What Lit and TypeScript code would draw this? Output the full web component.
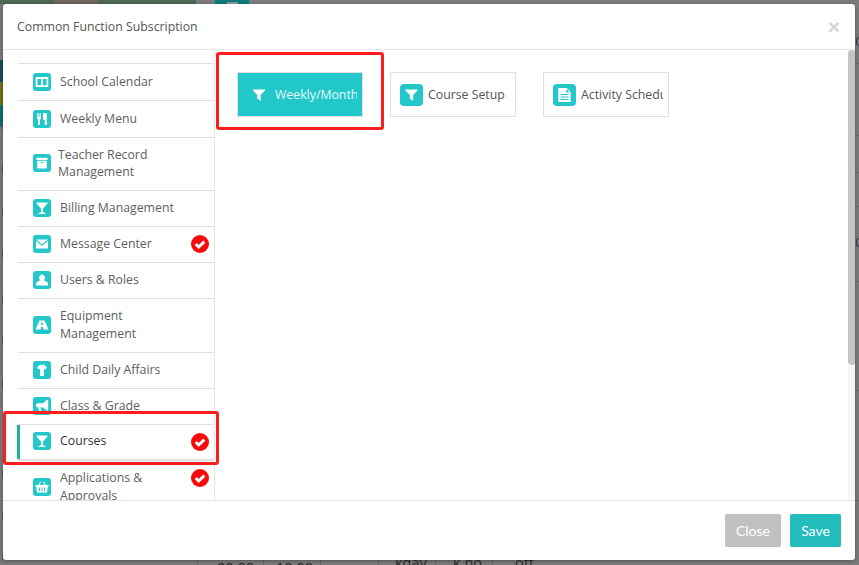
import { LitElement, html, css, svg } from "lit";
import { customElement } from "lit/decorators.js";

const glyphs: Record<string, unknown> = {
  columns: svg`<path fill-rule="evenodd" d="M3.500 4h11a.8.8 0 0 1 .8.8v8.400a.8.8 0 0 1-.8.8h-11a.8.8 0 0 1-.8-.8V4.800a.8.8 0 0 1 .8-.8zM4.500 6v6.300h3.600V6zm5.400 0v6.300h3.600V6z"/>`,
  food: svg`<path d="M4 3h.9v3.600h.7V3h.9v3.600h.7V3H8v5c0 .8-.5 1.300-1.100 1.500V15H5v-5.500C4.400 9.300 4 8.800 4 8zM10 3h3.800v12h-2V10H10z"/>`,
  box: svg`<path fill-rule="evenodd" d="M3.500 3.800h11V6h-11zM4.200 6.800h9.600v7.700H4.200zM7.800 8v1h2.400V8z"/>`,
  glass: svg`<path d="M3.500 3.500h11v1L10 9.500V13l2.500 1.200v.8h-7v-.8L8 13V9.500l-4.500-5z"/>`,
  mail: svg`<path d="M3 4.500h12L9 9.300zM3 6l6 4.800L15 6v7.500H3z"/>`,
  user: svg`<path d="M9 3.500a3 3 0 0 1 2.400 4.800C11 9 11 9.500 12 10c2 .7 3 1.400 3 3v1.500H3V13c0-1.600 1-2.300 3-3 1-.5 1-1 .6-1.700A3 3 0 0 1 9 3.500z"/>`,
  road: svg`<path fill-rule="evenodd" d="M6.500 4.500h5L15.500 13.500H10.300L10.100 11H7.900L7.700 13.500H2.500zM8.400 6.500L8.100 9.300h1.800L9.600 6.500z"/>`,
  shirt: svg`<path d="M7.300 3.500 9 4.300l1.700-.8L14 6.500 12.300 8.500 11 7.700V15H7V7.700l-1.300.8L4 6.500z"/>`,
  horn: svg`<path d="M14 2.800h1.200v10.600H14l-4-3H4.500L3 9.500v-2L4.500 6.200H10zM5 10.800h2.500l1 3.700H6.200z"/>`,
  basket: svg`<path fill-rule="evenodd" d="M5 7 7.300 3.500l.9.500L6.300 7h5.400L9.800 4l.9-.5L13 7h2.500v1.500h-.6l-.9 6H4l-.9-6h-.6V7zM6 9.500v3.500h1V9.500zm2.500 0v3.500h1V9.500zm2.500 0v3.500h1V9.500z"/>`,
  filter: svg`<path d="M3 3.500h12v1L10.700 9v6l-3.400-2.500V9L3 4.500z"/>`,
  doc: svg`<path fill-rule="evenodd" d="M2.800 2h8.400l4 4v10H2.800zM10.800 3v3.400h3.400zM5 8v1h8V8zm0 2.500v1h8v-1zM5 13v1h8v-1z"/>`,
};

const icon = (n: string) => svg`<svg viewBox="0 0 18 18" fill="#fff" aria-hidden="true">${glyphs[n]}</svg>`;

const items = [
  { label: "School Calendar", icon: "columns", h: 37, plain: true },
  { label: "Weekly Menu", icon: "food", h: 37, plain: true },
  { label: "Teacher Record Management", icon: "box", h: 53, tight: true },
  { label: "Billing Management", icon: "glass", h: 36 },
  { label: "Message Center", icon: "mail", h: 36, done: true },
  { label: "Users & Roles", icon: "user", h: 36 },
  { label: "Equipment Management", icon: "road", h: 54 },
  { label: "Child Daily Affairs", icon: "shirt", h: 36 },
  { label: "Class & Grade", icon: "horn", h: 36 },
  { label: "Courses", icon: "glass", h: 36, done: true, active: true },
  { label: "Applications & Approvals", icon: "basket", h: 54, done: true },
];

const cards = [
  { label: "Weekly/Month", icon: "filter", on: true },
  { label: "Course Setup", icon: "filter" },
  { label: "Activity Schedule", icon: "doc" },
];

const under = [
  { text: "00:00", w: 66, pad: 19, top: 0 },
  { text: "10:00", w: 57, pad: 12, top: 0 },
  { text: "12:00", w: 58, pad: 13, top: -13 },
  { text: "kday", w: 57, pad: 16, top: -5 },
  { text: "k.no", w: 57, pad: 17, top: -5 },
  { text: "off", w: 57, pad: 22, top: -5 },
];

const leftTicks = [122, 165, 208, 250, 295, 337, 380, 470, 512, 553];
const rightLines = [63, 135, 172, 206, 245, 281, 390, 500];

@customElement("app-root")
export class AppRoot extends LitElement {
  static styles = css`
    :host { display: block; }
    * { box-sizing: border-box; }
    .page {
      position: relative; width: 859px; height: 565px; overflow: hidden;
      padding: 4px 4px 5px 3px; background: #7c7c7c;
      font-family: "Open Sans", "Noto Sans", sans-serif; color: #555;
    }
    .bg { position: absolute; }
    .bg-green { left: 0; top: 0; width: 196px; height: 4px; background: #4e6a54; }
    .bg-photo { left: 54px; top: 0; width: 44px; height: 4px; background: #6f665c; }
    .bg-teal { left: 215px; top: 0; width: 34px; height: 4px; background: #0f7c7c; }
    .bg-teal-in { left: 227px; top: 2px; width: 11px; height: 2px; background: #8d9c9c; }
    .bg-left1 { left: 0; top: 60px; width: 3px; height: 22px; background: #17505a; }
    .bg-left2 { left: 0; top: 82px; width: 3px; height: 23px; background: #6f7414; }
    .bg-left3 { left: 0; top: 105px; width: 3px; height: 22px; background: #0f6f72; }
    .tick { left: 2px; width: 1px; height: 8px; background: #6e5a4c; }
    .bg-line { right: 0; width: 4px; height: 1px; background: #6a6a6a; }
    .ring {
      right: -4px; width: 7px; height: 9px; border: 1px solid #2b3350; border-radius: 50%;
    }
    .r1 { top: 37px; }
    .r2 { top: 238px; }
    .bg-table {
      left: 197px; top: 560px; height: 5px; display: flex; overflow: hidden;
      font: 14.5px/16px "Open Sans", sans-serif; color: #2a2a2a;
    }
    .cell { height: 5px; border-left: 1px solid #6a6a6a; white-space: nowrap; }
    .cell span { display: block; }

    .modal {
      position: relative; height: 556px; display: flex; flex-direction: column;
      background: #fff; border-radius: 3px; box-shadow: 0 1px 4px rgba(0,0,0,.35); overflow: hidden;
    }
    header {
      flex: 0 0 46px; display: flex; align-items: center; justify-content: space-between;
      padding: 0 15px 1px 14px; border-bottom: 1px solid #e5e5e5;
      font-size: 12.3px; color: #555;
    }
    .x { font: 700 21px/1 "Liberation Sans", sans-serif; color: #d4d4d4; }
    .body { flex: 1; display: flex; min-height: 0; }
    .side { flex: 0 0 212px; border-right: 1px solid #e5e5e5; padding: 13px 0 0 15px; overflow: hidden; }
    .row {
      position: relative; display: flex; align-items: center; gap: 9px;
      padding: 0 0 2px 15px; border-top: 1px solid #e0e0e0;
      font-size: 12.3px; line-height: 18px; color: #5e5e5e;
    }
    .row.plain { padding-bottom: 0; }
    .row.tight { gap: 7px; line-height: 17px; }
    .row.active { color: #333; border-bottom: 1px solid #e0e0e0; }
    .row.active::before {
      content: ""; position: absolute; left: -1px; top: 0; bottom: 0; width: 3px; background: #1fb093;
    }
    .ic { flex: none; width: 18px; height: 18px; background: #22c7ca; border-radius: 3px; }
    .ic svg { display: block; width: 100%; height: 100%; }
    .label { width: 122px; }
    .check { position: absolute; right: 5px; top: 8px; width: 18px; height: 18px; }
    .check svg { display: block; }
    .main { flex: 1; display: flex; min-width: 0; }
    .cards { flex: 1; display: flex; align-items: flex-start; gap: 27px; padding: 22px 0 0 22px; }
    .card {
      flex: 0 0 126px; height: 45px; display: flex; align-items: center; gap: 5px;
      padding: 0 5px 0 9px; border: 1px solid #e0e0e0; background: #fff;
      font-size: 12.3px; color: #555; overflow: hidden; white-space: nowrap;
    }
    .card .ic { width: 23px; height: 22px; border-radius: 4px; padding: 2px; }
    .card .txt { overflow: hidden; }
    .card.on { background: #22c7ca; color: #e6fbfb; padding-left: 12px; gap: 7px; }
    .card.on .ic { width: 18px; height: 18px; padding: 0; background: transparent; }
    .bar { flex: 0 0 8px; background: #f6f6f6; margin-right: -1px; }
    .thumb { height: 315px; background: #c6c6c6; border-radius: 4px; }
    footer {
      flex: 0 0 60px; display: flex; justify-content: flex-end; align-items: flex-start; gap: 9px;
      padding: 13px 14px 0 0; border-top: 1px solid #e5e5e5;
    }
    button {
      height: 33px; border: 0; border-radius: 2px; color: #fff;
      font: 14px "Lato", sans-serif; padding: 0;
    }
    .close { width: 56px; background: #c1c1c1; }
    .save { width: 51px; background: #22bcbd; }
    .mark { position: absolute; border: 3px solid #fa1e1e; border-radius: 3px; pointer-events: none; }
    .m1 { left: 216px; top: 52px; width: 168px; height: 78px; }
    .m2 { left: 3px; top: 411px; width: 216px; height: 54px; }
  `;

  render() {
    return html`
      <div class="page">
        <div class="bg bg-green"></div><div class="bg bg-photo"></div>
        <div class="bg bg-teal"></div><div class="bg bg-teal-in"></div>
        <div class="bg bg-left1"></div><div class="bg bg-left2"></div><div class="bg bg-left3"></div>
        ${leftTicks.map((y) => html`<div class="bg tick" style="top:${y}px"></div>`)}
        ${rightLines.map((y) => html`<div class="bg bg-line" style="top:${y}px"></div>`)}
        <div class="bg ring r1"></div><div class="bg ring r2"></div>
        <div class="bg bg-table">
          ${under.map(
            (c) => html`<div class="cell" style="width:${c.w}px;padding-left:${c.pad}px"><span style="margin-top:${c.top}px">${c.text}</span></div>`
          )}
        </div>
        <div class="modal">
          <header><span>Common Function Subscription</span><span class="x">×</span></header>
          <div class="body">
            <div class="side">
              ${items.map(
                (i) => html`
                  <div class="row ${i.active ? "active" : ""} ${i.tight ? "tight" : ""} ${i.plain ? "plain" : ""}" style="height:${i.h}px">
                    <span class="ic">${icon(i.icon)}</span>
                    <span class="label">${i.label}</span>
                    ${i.done
                      ? html`<span class="check"><svg width="18" height="18" viewBox="0 0 18 18"><circle cx="9" cy="9" r="9" fill="#f80a0a"/><path d="M4.700 9 7.700 12l5.600-5.400" fill="none" stroke="#fff" stroke-width="3"/></svg></span>`
                      : ""}
                  </div>
                `
              )}
            </div>
            <div class="main">
              <div class="cards">
                ${cards.map(
                  (c) => html`<div class="card ${c.on ? "on" : ""}">
                    <span class="ic">${icon(c.icon)}</span><span class="txt">${c.label}</span>
                  </div>`
                )}
              </div>
              <div class="bar"><div class="thumb"></div></div>
            </div>
          </div>
          <footer>
            <button class="close">Close</button>
            <button class="save">Save</button>
          </footer>
        </div>
        <div class="mark m1"></div>
        <div class="mark m2"></div>
      </div>
    `;
  }
}
